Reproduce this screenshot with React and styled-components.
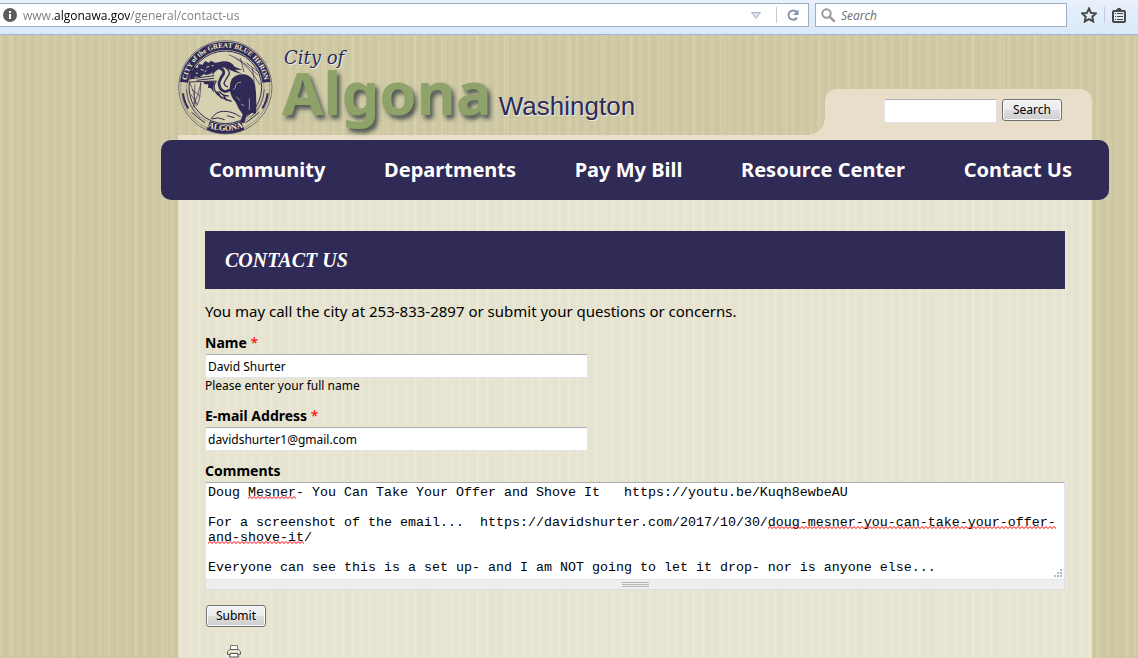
import React, { useState } from 'react';
import styled, { createGlobalStyle } from 'styled-components';

const navy = '#302a56';
const sand = '#e9dec9';
const paper = '#cfcaa5';
const bodyFont = "'Noto Sans', 'Open Sans', sans-serif";

const GlobalStyle = createGlobalStyle`
  * {
    box-sizing: border-box;
  }

  body {
    margin: 0;
    min-height: 100vh;
    font-family: ${bodyFont};
    font-size: 14px;
    color: #000;
    background-color: ${paper};
    background-image:
      repeating-linear-gradient(90deg, rgba(255, 250, 205, 0.1) 0 2px, transparent 2px 5px, rgba(150, 145, 100, 0.05) 5px 7px, transparent 7px 9px),
      repeating-linear-gradient(90deg, transparent 0 11px, rgba(255, 250, 205, 0.1) 11px 13px, transparent 13px 31px),
      repeating-linear-gradient(0deg, rgba(140, 135, 90, 0.05) 0 1px, transparent 1px 4px);
  }
`;

/* Browser bar */

const Toolbar = styled.div`
  display: flex;
  align-items: flex-start;
  gap: 6px;
  height: 35px;
  padding-top: 3px;
  padding-right: 5px;
  background: linear-gradient(#e8f1fc, #d9e8f8);
  border-bottom: 1px solid #9db6d4;
`;

const BarField = styled.label`
  display: flex;
  align-items: center;
  height: 24px;
  background: #fff;
  border: 1px solid #9aaec4;
`;

const UrlField = styled(BarField)`
  flex: 1;
  gap: 6px;
  padding-left: 3px;
  border-left: none;
`;

const SearchField = styled(BarField)`
  width: 252px;
  gap: 5px;
  padding-left: 5px;
`;

const BarInput = styled.input`
  flex: 1;
  min-width: 0;
  padding: 0;
  border: none;
  outline: none;
  background: none;
  font-family: 'Open Sans', sans-serif;
  font-size: 12px;

  &::placeholder {
    color: #6d6d6d;
    font-style: italic;
  }
`;

const UrlInput = styled(BarInput)`
  background-image: linear-gradient(90deg, #7b7b7b 30px, #000 30px 107px, #7b7b7b 107px);
  -webkit-background-clip: text;
  background-clip: text;
  -webkit-text-fill-color: transparent;
`;

const BarButton = styled.button`
  display: flex;
  align-items: center;
  justify-content: center;
  width: ${(props) => props.$width || 32}px;
  height: 16px;
  padding: 0;
  border: none;
  border-left: ${(props) => (props.$divided ? '1px solid #c3ccd6' : 'none')};
  background: none;
  cursor: pointer;
`;

const BarTools = styled.div`
  display: flex;
  align-items: center;
  height: 24px;
`;

/* Page */

const Page = styled.div`
  margin-left: 161px;
  margin-right: 29px;
`;

const Header = styled.header`
  display: flex;
  justify-content: space-between;
  align-items: flex-end;
  height: 105px;
  margin: 0 17px;
  border-bottom: 5px solid ${sand};
`;

const Brand = styled.a`
  display: flex;
  gap: 9px;
  color: ${navy};
  text-decoration: none;
`;

const Wordmark = styled.div`
  display: flex;
  flex-direction: column;
  padding-top: 6px;
`;

const CityOf = styled.span`
  font-family: 'DejaVu Serif', serif;
  font-style: italic;
  font-size: 18px;
  line-height: 24px;
  padding-left: 2px;
  text-shadow: 1px 1px 1px #e8f0f4;
`;

const NameRow = styled.div`
  display: flex;
  align-items: baseline;
  gap: 7px;
  line-height: 44px;
`;

const CityName = styled.span`
  font-family: 'Noto Sans', sans-serif;
  font-weight: 700;
  font-size: 60px;
  color: #8fa26a;
  text-shadow: 3px 4px 4px rgba(50, 60, 65, 0.8);
`;

const StateName = styled.span`
  font-family: 'Liberation Sans', Arial, sans-serif;
  font-size: 26px;
  text-shadow: 1px 1px 1px #e8f0f4;
`;

const SearchTab = styled.form`
  position: relative;
  display: flex;
  align-items: flex-start;
  justify-content: flex-end;
  gap: 5px;
  width: 267px;
  height: 46px;
  padding: 10px 30px 0 0;
  background: ${sand};
  border-radius: 12px 12px 0 0;

  &::before {
    content: '';
    position: absolute;
    left: -16px;
    bottom: 0;
    width: 16px;
    height: 16px;
    background: radial-gradient(circle at 0 0, transparent 15px, ${sand} 16px);
  }
`;

const TextInput = styled.input`
  display: block;
  width: ${(props) => props.$width}px;
  max-width: 100%;
  height: 24px;
  padding: 1px 2px;
  border: 1px solid #e2e3ea;
  border-top-color: #abadb3;
  border-radius: 2px;
  background: #fff;
  color: #000;
  font-family: ${bodyFont};
  font-size: 12px;
`;

const Button = styled.button`
  display: block;
  width: 60px;
  height: 22px;
  padding: 0;
  border: 1px solid #707070;
  border-radius: 3px;
  box-shadow: inset 0 0 0 1px #fbfbfb;
  background: linear-gradient(#f2f2f2 0%, #ebebeb 50%, #dddddd 50%, #cfcfcf 100%);
  color: #000;
  font-family: ${bodyFont};
  font-size: 12px;
  line-height: 18px;
  cursor: pointer;
`;

const Nav = styled.nav`
  display: flex;
  align-items: center;
  justify-content: space-between;
  height: 60px;
  padding: 0 37px 2px 48px;
  border-radius: 10px;
  background: ${navy};
`;

const NavLink = styled.a`
  color: #fff;
  font-size: 20px;
  font-weight: 700;
  text-decoration: none;
`;

const Main = styled.main`
  margin: 0 17px;
  min-height: calc(100vh - 200px);
  padding: 31px 27px 0;
  background: rgba(255, 255, 255, 0.5);
`;

const Title = styled.h1`
  margin: 0;
  padding: 0 20px;
  background: ${navy};
  color: #fff;
  font-family: 'Liberation Serif', 'Times New Roman', serif;
  font-size: 20px;
  font-style: italic;
  font-weight: 700;
  line-height: 58px;
  text-transform: uppercase;
`;

const Intro = styled.p`
  margin: 12px 0;
  font-size: 15px;
  line-height: 20px;
`;

const Field = styled.div`
  margin-bottom: ${(props) => props.$gap}px;
`;

const Label = styled.label`
  display: block;
  padding-bottom: 1px;
  font-weight: 700;
  line-height: 20px;
`;

const Required = styled.span`
  color: #f00;
  font-weight: 400;
`;

const Hint = styled.div`
  font-size: 12px;
  line-height: 16px;
`;

const CommentBox = styled.div`
  position: relative;
`;

const TextArea = styled.textarea`
  display: block;
  width: 100%;
  height: 98px;
  padding: 2px;
  border: 1px solid #e2e3ea;
  border-top-color: #abadb3;
  outline: none;
  overflow: hidden;
  resize: none;
  background: #fff;
  color: #000;
  font-family: 'Liberation Mono', 'Courier New', monospace;
  font-size: 10pt;
  line-height: 15px;
`;

/* Spelling mark, placed by text line and column */
const SquiggleMark = styled.svg`
  position: absolute;
  top: calc(14px + ${(props) => props.$line} * 15px);
  left: calc(3px + ${(props) => props.$col} * 8px);
  width: calc(${(props) => props.$length} * 8px);
  height: 3px;
  pointer-events: none;
`;

const Resizer = styled.svg`
  position: absolute;
  right: 3px;
  bottom: 2px;
`;

const Grip = styled.div`
  display: flex;
  align-items: center;
  justify-content: center;
  height: 10px;
  background: #eee;
  border: 1px solid #ddd;
  border-top: none;
`;

const GripLines = styled.div`
  width: 27px;
  height: 5px;
  background: repeating-linear-gradient(#b5b5b5 0 1px, #eee 1px 2px);
`;

const Actions = styled.div`
  padding: 15px 1px 0;
`;

const PrintLink = styled.a`
  display: block;
  width: 16px;
  margin: 18px 0 0 22px;
  line-height: 0;
`;

const InfoIcon = () => (
  <svg width="14" height="14" viewBox="0 0 14 14" aria-hidden="true">
    <circle cx="7" cy="7" r="7" fill="#5c5c5c" />
    <path d="M6 3h2v2H6zM6 6h2v5H6z" fill="#fff" />
  </svg>
);

const Arrow = () => (
  <svg width="10" height="7" viewBox="0 0 10 7" aria-hidden="true">
    <path d="M.5 .5h9L5 6.5z" fill="#dbe2ea" stroke="#a5b1bf" />
  </svg>
);

const Reload = () => (
  <svg width="12" height="12" viewBox="0 0 12 12" aria-hidden="true">
    <path d="M9.5 3A4.6 4.6 0 1 0 10 8.6" fill="none" stroke="#8494a7" strokeWidth="2" />
    <path d="M11.5 .5v5.5H6z" fill="#8494a7" />
  </svg>
);

const Magnifier = () => (
  <svg width="15" height="15" viewBox="0 0 15 15" aria-hidden="true">
    <circle cx="5.5" cy="5.5" r="4.2" fill="none" stroke="#9a9a9a" strokeWidth="2" />
    <path d="M8.6 8.6l5 5" stroke="#9a9a9a" strokeWidth="2.4" />
  </svg>
);

const Star = () => (
  <svg width="16" height="16" viewBox="0 0 16 16" aria-hidden="true">
    <path
      d="M8 1.5l2 4.4 4.8.5-3.5 3.3.9 4.8L8 12.2l-4.2 2.3.9-4.8L1.2 6.4 6 5.9z"
      fill="none"
      stroke="#484848"
      strokeWidth="2"
    />
  </svg>
);

const Clipboard = () => (
  <svg width="14" height="15" viewBox="0 0 14 15" aria-hidden="true">
    <path d="M4 3V2l2-2h2l2 2v1z" fill="#484848" />
    <rect x="1" y="3" width="12" height="11" rx="1" fill="none" stroke="#484848" strokeWidth="2" />
    <path d="M3 5.5h1M5 5.5h6M3 8.5h1M5 8.5h6M3 11.5h1M5 11.5h6" stroke="#484848" />
  </svg>
);

const Printer = () => (
  <svg width="14" height="13" viewBox="0 0 14 13" aria-hidden="true">
    <path d="M3.5 5V.5h7V5" fill="#fff" stroke="#777" />
    <path d="M2.5 4.5h9l2 2v3H.5v-3z" fill="#ddd7bd" stroke="#666" />
    <path d="M1.5 6.5h11" stroke="#f8f5e4" />
    <path d="M3.5 8.5h7l1 3.5h-9z" fill="#fff" stroke="#555" />
  </svg>
);

const Seal = () => (
  <svg width="95" height="95" viewBox="9 12 285 285" role="img" aria-label="City of Algona seal">
    <defs>
      <path id="seal-top" d="M34 168A118 118 0 1 1 268 168" />
      <path id="seal-bottom" d="M66 253A131 131 0 0 0 236 253" />
    </defs>
    <circle cx="151" cy="154" r="110" fill="#d6d1b0" />
    <g fill="none" stroke={navy}>
      <circle cx="151" cy="154" r="140" strokeWidth="3" opacity="0.55" />
      <circle cx="151" cy="154" r="134" strokeWidth="2" opacity="0.5" />
      <circle cx="151" cy="154" r="109" strokeWidth="3" />
      <circle cx="151" cy="154" r="116" strokeWidth="2" opacity="0.4" />
      <path d="M27 139A125 125 0 0 1 275 139" strokeWidth="25" />
      <path d="M100 268A125 125 0 0 0 203 268" strokeWidth="27" />
      <path d="M24 172Q27 198 40 217M278 172Q275 198 262 217" strokeWidth="6" />
      <path d="M34 160Q36 210 76 246M268 160Q266 210 226 246" strokeWidth="2" />
      <path d="M49 228Q67 246 90 260M253 228Q235 246 212 260" strokeWidth="3" />
    </g>

    <g transform="translate(33 36)">
      {/* foliage */}
      <path
        d="M9 92L13 80L9 72L20 67L23 57L35 60L38 48L50 50L57 39L68 44L76 38L86 44L103 43L91 61L81 67L75 77L61 81L53 79L42 87L28 86L20 93z"
        fill={navy}
      />
      <path d="M44 64l9 3M61 58l9-3M77 54l6-2M29 75l7 1M56 72l5-4" stroke="#d6d1b0" strokeWidth="3" />
      <path d="M51 101L83 98L91 125L82 132L75 121L66 119L67 109L56 109z" fill={navy} />

      {/* branches and reeds */}
      <g fill="none" stroke={navy} strokeWidth="2">
        <path d="M128 20Q171 36 216 82M148 30Q190 54 222 111M163 30L174 72M181 44L225 78M199 60L205 102" />
        <path d="M11 104Q24 130 31 175M45 104Q37 143 20 178M44 104Q45 145 34 171M18 124L43 145M13 137L34 169M27 109L24 169" />
        <path d="M75 212Q91 190 112 190Q139 189 164 207M76 213Q96 205 116 215M123 203L145 209" strokeWidth="3" />
      </g>

      {/* beak and head */}
      <path d="M10 94L84 86L91 67L103 67L109 79L96 98L84 100L10 102z" fill="#d6d1b0" />
      <path d="M10 93L85 83M10 102L87 99M32 97L84 91" fill="none" stroke={navy} strokeWidth="3" />
      <path
        d="M77 65Q89 41 111 40Q135 39 146 56L170 66L147 65L168 78Q146 73 132 66Q117 54 101 62Q89 66 80 81z"
        fill={navy}
      />

      {/* neck */}
      <path
        d="M119 60Q134 71 125 84Q114 93 112 105Q116 120 130 119L146 163Q119 161 100 151Q83 139 81 118Q83 103 98 88Q108 79 103 68z"
        fill="#d6d1b0"
      />
      <path
        d="M101 61Q115 64 113 77Q103 90 99 104Q99 124 114 130Q124 132 132 124"
        fill="none"
        stroke={navy}
        strokeWidth="8"
      />
      <path
        d="M119 59Q133 69 129 80Q119 95 114 105Q116 116 126 116M91 98Q77 117 91 135Q104 151 137 160M99 130Q109 143 128 144M93 130L107 151M111 139L122 157"
        fill="none"
        stroke={navy}
        strokeWidth="4"
      />

      {/* wing and legs */}
      <path
        d="M137 94Q150 77 175 79Q197 82 207 108Q213 146 210 197L196 195L181 203L175 226L163 223L170 199Q157 183 149 163Q132 144 131 121Q132 103 137 94z"
        fill={navy}
      />
      <path d="M141 126Q151 120 149 111Q156 101 165 103M151 146L162 158M165 168l10 5M190 151v35" fill="none" stroke="#d6d1b0" strokeWidth="2" />
    </g>

    <g fill="#eeead0" fontFamily="Liberation Serif, serif" fontWeight="700">
      <text fontSize="21">
        <textPath href="#seal-top" startOffset="50%" textAnchor="middle">
          CITY of the GREAT BLUE HERON
        </textPath>
      </text>
      <text fontSize="25">
        <textPath href="#seal-bottom" startOffset="50%" textAnchor="middle">
          ALGONA
        </textPath>
      </text>
    </g>
  </svg>
);

const Squiggle = ({ line, col, length }) => (
  <SquiggleMark $line={line} $col={col} $length={length} aria-hidden="true">
    <defs>
      <pattern id={`wave-${line}`} width="4" height="3" patternUnits="userSpaceOnUse">
        <path d="M-1 3.5L2 .5l3 3" fill="none" stroke="#f00" />
      </pattern>
    </defs>
    <rect width="100%" height="3" fill={`url(#wave-${line})`} />
  </SquiggleMark>
);

const links = ['Community', 'Departments', 'Pay My Bill', 'Resource Center', 'Contact Us'];

const message = `Doug Mesner- You Can Take Your Offer and Shove It   https://youtu.be/Kuqh8ewbeAU

For a screenshot of the email...  https://davidshurter.com/2017/10/30/doug-mesner-you-can-take-your-offer-and-shove-it/

Everyone can see this is a set up- and I am NOT going to let it drop- nor is anyone else...`;

const misspelled = [
  { line: 0, col: 5, length: 6 },
  { line: 2, col: 70, length: 36 },
  { line: 3, col: 0, length: 12 },
];

const BrowserBar = () => (
  <Toolbar>
    <UrlField>
      <InfoIcon />
      <UrlInput aria-label="Address" defaultValue="www.algonawa.gov/general/contact-us" spellCheck={false} />
      <BarButton type="button" aria-label="Show history" $width={28}>
        <Arrow />
      </BarButton>
      <BarButton type="button" aria-label="Reload" $divided>
        <Reload />
      </BarButton>
    </UrlField>
    <SearchField>
      <Magnifier />
      <BarInput aria-label="Web search" placeholder="Search" />
    </SearchField>
    <BarTools>
      <BarButton type="button" aria-label="Bookmark" $width={31}>
        <Star />
      </BarButton>
      <BarButton type="button" aria-label="Bookmarks list" $width={29} $divided>
        <Clipboard />
      </BarButton>
    </BarTools>
  </Toolbar>
);

const ContactForm = () => {
  const [comments, setComments] = useState(message);

  return (
    <form onSubmit={(e) => e.preventDefault()}>
      <Field $gap={12}>
        <Label htmlFor="name">
          Name <Required>*</Required>
        </Label>
        <TextInput id="name" $width={383} defaultValue="David Shurter" />
        <Hint>Please enter your full name</Hint>
      </Field>
      <Field $gap={10}>
        <Label htmlFor="email">
          E-mail Address <Required>*</Required>
        </Label>
        <TextInput id="email" type="email" $width={383} defaultValue="davidshurter1@gmail.com" />
      </Field>
      <Field $gap={0}>
        <Label htmlFor="comments">Comments</Label>
        <CommentBox>
          <TextArea
            id="comments"
            spellCheck={false}
            value={comments}
            onChange={(e) => setComments(e.target.value)}
          />
          {comments === message && misspelled.map((word) => <Squiggle key={word.line} {...word} />)}
          <Resizer width="9" height="9" viewBox="0 0 9 9" aria-hidden="true">
            <path d="M7 0h2v2H7zM4 3h2v2H4zM7 3h2v2H7zM1 6h2v2H1zM4 6h2v2H4zM7 6h2v2H7z" fill="#b8b8b8" />
          </Resizer>
        </CommentBox>
        <Grip>
          <GripLines />
        </Grip>
      </Field>
      <Actions>
        <Button type="submit">Submit</Button>
      </Actions>
    </form>
  );
};

const App = () => (
  <>
    <GlobalStyle />
    <BrowserBar />
    <Page>
      <Header>
        <Brand href="#home">
          <Seal />
          <Wordmark>
            <CityOf>City of</CityOf>
            <NameRow>
              <CityName>Algona</CityName>
              <StateName>Washington</StateName>
            </NameRow>
          </Wordmark>
        </Brand>
        <SearchTab onSubmit={(e) => e.preventDefault()}>
          <TextInput aria-label="Search this site" $width={113} />
          <Button type="submit">Search</Button>
        </SearchTab>
      </Header>
      <Nav>
        {links.map((link) => (
          <NavLink key={link} href="#menu">
            {link}
          </NavLink>
        ))}
      </Nav>
      <Main>
        <Title>Contact Us</Title>
        <Intro>You may call the city at 253-833-2897 or submit your questions or concerns.</Intro>
        <ContactForm />
        <PrintLink href="#print" aria-label="Print">
          <Printer />
        </PrintLink>
      </Main>
    </Page>
  </>
);

export default App;
